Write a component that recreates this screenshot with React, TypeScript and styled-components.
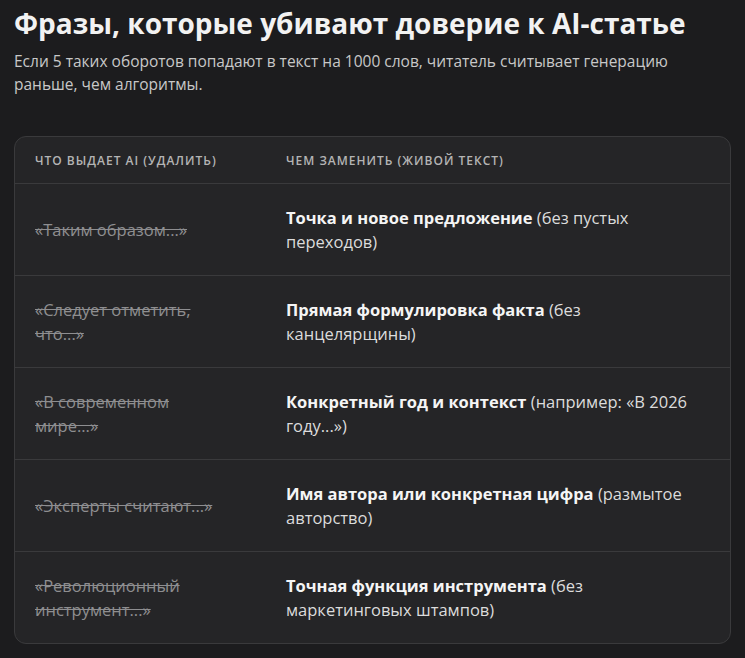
import React from "react";
import styled, { createGlobalStyle } from "styled-components";

const Global = createGlobalStyle`
  html, body { margin: 0; background: #1c1c1e; }
  body { font-family: "Open Sans", "Noto Sans", sans-serif; color: #e6e6e6; }
`;

const Page = styled.div`
  padding: 4px 14px 10px 14px;
`;

const Title = styled.h1`
  margin: 0;
  font-size: 28px;
  font-weight: 700;
  color: #f2f2f2;
  line-height: 38px;
`;

const Lead = styled.p`
  margin: 8px 0 0;
  max-width: 680px;
  font-size: 15.5px;
  line-height: 23px;
  color: #c8c8c8;
`;

const Card = styled.div`
  margin-top: 40px;
  background: #252527;
  border: 1px solid #3a3a3c;
  border-radius: 12px;
  overflow: hidden;
`;

const Row = styled.div<{ $head?: boolean }>`
  display: grid;
  grid-template-columns: 251px 1fr;
  align-items: center;
  padding: 0 30px 0 20px;
  min-height: ${(p) => (p.$head ? 46 : 91)}px;
  & + & { border-top: 1px solid #3a3a3c; }
`;

const Head = styled.div`
  font-size: 12px;
  font-weight: 600;
  letter-spacing: 1px;
  color: #b4b4b4;
  text-transform: uppercase;
`;

const Bad = styled.div`
  font-size: 16.5px;
  line-height: 24px;
  color: #8e8e90;
  text-decoration: line-through;
  padding-right: 60px;
`;

const Good = styled.div`
  font-size: 16.5px;
  line-height: 24px;
  color: #dcdcdc;
  b { color: #f5f5f5; font-weight: 700; }
`;

const rows = [
  ["«Таким образом...»", "Точка и новое предложение", "(без пустых переходов)"],
  ["«Следует отметить, что...»", "Прямая формулировка факта", "(без канцелярщины)"],
  ["«В современном мире...»", "Конкретный год и контекст", "(например: «В 2026 году...»)"],
  ["«Эксперты считают...»", "Имя автора или конкретная цифра", "(размытое авторство)"],
  ["«Революционный инструмент...»", "Точная функция инструмента", "(без маркетинговых штампов)"],
];

export default function App() {
  return (
    <Page>
      <Global />
      <Title>Фразы, которые убивают доверие к AI-статье</Title>
      <Lead>
        Если 5 таких оборотов попадают в текст на 1000 слов, читатель считывает генерацию
        раньше, чем алгоритмы.
      </Lead>
      <Card>
        <Row $head>
          <Head>Что выдает AI (удалить)</Head>
          <Head>Чем заменить (живой текст)</Head>
        </Row>
        {rows.map(([bad, strong, rest]) => (
          <Row key={bad}>
            <Bad>{bad}</Bad>
            <Good>
              <b>{strong}</b> {rest}
            </Good>
          </Row>
        ))}
      </Card>
    </Page>
  );
}
